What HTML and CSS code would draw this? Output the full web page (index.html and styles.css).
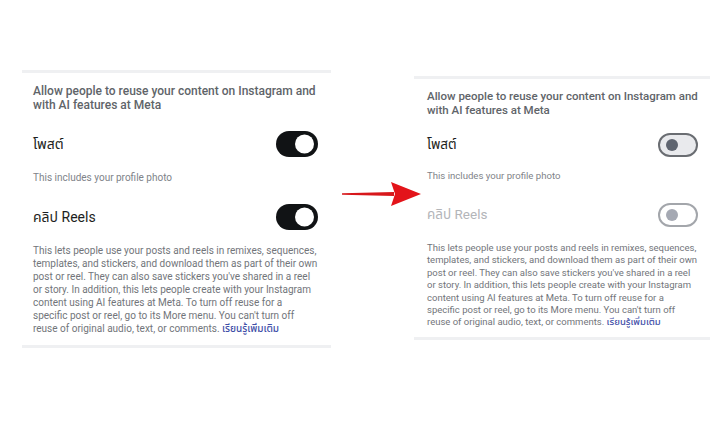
FILE: index.html
```html
<!DOCTYPE html>
<html>
    <head>
        <meta charset="utf-8">
        <meta name="viewport" content="width=device-width,initial-scale=1.0">
        <title>Reuse settings</title>
        <link rel="stylesheet" href="styles.css">
    </head>
    <body>
        <div class="compare">
            <section class="panel before">
                <p class="heading">Allow people to reuse your content on Instagram and with AI features at Meta</p>
                <div class="row">
                    <span class="label">โพสต์</span>
                    <span class="toggle on"><span class="knob"></span></span>
                </div>
                <p class="note">This includes your profile photo</p>
                <div class="row">
                    <span class="label">คลิป Reels</span>
                    <span class="toggle on"><span class="knob"></span></span>
                </div>
                <p class="desc">This lets people use your posts and reels in remixes, sequences,<br>
                    templates, and stickers, and download them as part of their own<br>
                    post or reel. They can also save stickers you've shared in a reel<br>
                    or story. In addition, this lets people create with your Instagram<br>
                    content using AI features at Meta. To turn off reuse for a<br>
                    specific post or reel, go to its More menu. You can't turn off<br>
                    reuse of original audio, text, or comments. <a href="#">เรียนรู้เพิ่มเติม</a></p>
            </section>

            <section class="panel after">
                <p class="heading">Allow people to reuse your content on Instagram and with AI features at Meta</p>
                <div class="row">
                    <span class="label">โพสต์</span>
                    <span class="toggle off"><span class="knob"></span></span>
                </div>
                <p class="note">This includes your profile photo</p>
                <div class="row disabled">
                    <span class="label">คลิป Reels</span>
                    <span class="toggle off"><span class="knob"></span></span>
                </div>
                <p class="desc">This lets people use your posts and reels in remixes, sequences,<br>
                    templates, and stickers, and download them as part of their own<br>
                    post or reel. They can also save stickers you've shared in a reel<br>
                    or story. In addition, this lets people create with your Instagram<br>
                    content using AI features at Meta. To turn off reuse for a<br>
                    specific post or reel, go to its More menu. You can't turn off<br>
                    reuse of original audio, text, or comments. <a href="#">เรียนรู้เพิ่มเติม</a></p>
            </section>

            <svg class="arrow" width="84" height="28" viewBox="0 0 84 28">
                <path d="M2 13.3 L54 12 L54 16 L2 14.7 Z" fill="#d7171b"/>
                <path d="M51 2 L81 14 L51 26 L55 14 Z" fill="#e3141a"/>
            </svg>
        </div>
    </body>
</html>
```

FILE: styles.css
```css
html, body {
    margin: 0;
    padding: 0;
    background-color: #fff;
    font-family: "Roboto", "Noto Sans", "Noto Sans Thai", "DejaVu Sans", sans-serif;
}

p {
    margin: 0;
}

.compare {
    position: relative;
    width: 728px;
    height: 437px;
    display: flex;
    align-items: flex-start;
}

.panel {
    box-sizing: border-box;
    border-top: 3px solid #eff0f2;
    border-bottom: 3px solid #eff0f2;
}

/* left column: original settings */
.panel.before {
    width: 309px;
    margin: 70px 0 0 22px;
    padding: 11px 13px 10px 11px;
}

.heading {
    font-size: 12px;
    line-height: 14px;
    font-weight: 500;
    color: #606469;
}

.row {
    display: flex;
    align-items: center;
    justify-content: space-between;
}

.label {
    font-size: 14px;
    color: #1c1e21;
}

.note {
    font-size: 10px;
    color: #808389;
}

.desc {
    margin-right: -12px;
    white-space: nowrap;
    font-size: 10px;
    line-height: 13px;
    color: #72757a;
}

.desc a {
    color: #3f4fa8;
    text-decoration: none;
    font-weight: 500;
}

.before .row:first-of-type {
    margin-top: 17px;
}

.before .row {
    height: 30px;
}

.before .note {
    margin-top: 12px;
    line-height: 14px;
}

.before .row + .desc {
    margin-top: 12px;
}

.before .note + .row {
    margin-top: 17px;
}

.toggle {
    position: relative;
    box-sizing: border-box;
    display: inline-block;
    width: 42px;
    height: 26px;
    border-radius: 13px;
}

.toggle .knob {
    position: absolute;
    top: 50%;
    border-radius: 50%;
    transform: translateY(-50%);
}

.toggle.on {
    background-color: #111315;
}

.toggle.on .knob {
    right: 4px;
    width: 19px;
    height: 19px;
    background-color: #fff;
}

.toggle.off {
    width: 40px;
    height: 24px;
    border: 2px solid #6a6d72;
    background-color: #e9eaed;
}

.toggle.off .knob {
    left: 6px;
    width: 12px;
    height: 12px;
    background-color: #5f6570;
}

.row.disabled .label {
    color: #b3b5b9;
}

.row.disabled .toggle.off {
    border-color: #a3a6ab;
    background-color: #fff;
}

.row.disabled .toggle.off .knob {
    background-color: #a5a9b3;
}

/* right column: settings after the change, slightly smaller */
.panel.after {
    width: 296px;
    margin: 76px 0 0 83px;
    padding: 11px 12px 8px 13px;
}

.after .heading {
    font-size: 11.5px;
    line-height: 13.5px;
}

.after .label {
    font-size: 13.5px;
}

.after .row {
    height: 28px;
}

.after .row:first-of-type {
    margin-top: 14px;
}

.after .note {
    margin-top: 10px;
    line-height: 13px;
    font-size: 9.6px;
}

.after .note + .row {
    margin-top: 19px;
}

.after .desc {
    margin-top: 13px;
    font-size: 9.5px;
    line-height: 12.4px;
}

.arrow {
    position: absolute;
    left: 340px;
    top: 180px;
}
```
